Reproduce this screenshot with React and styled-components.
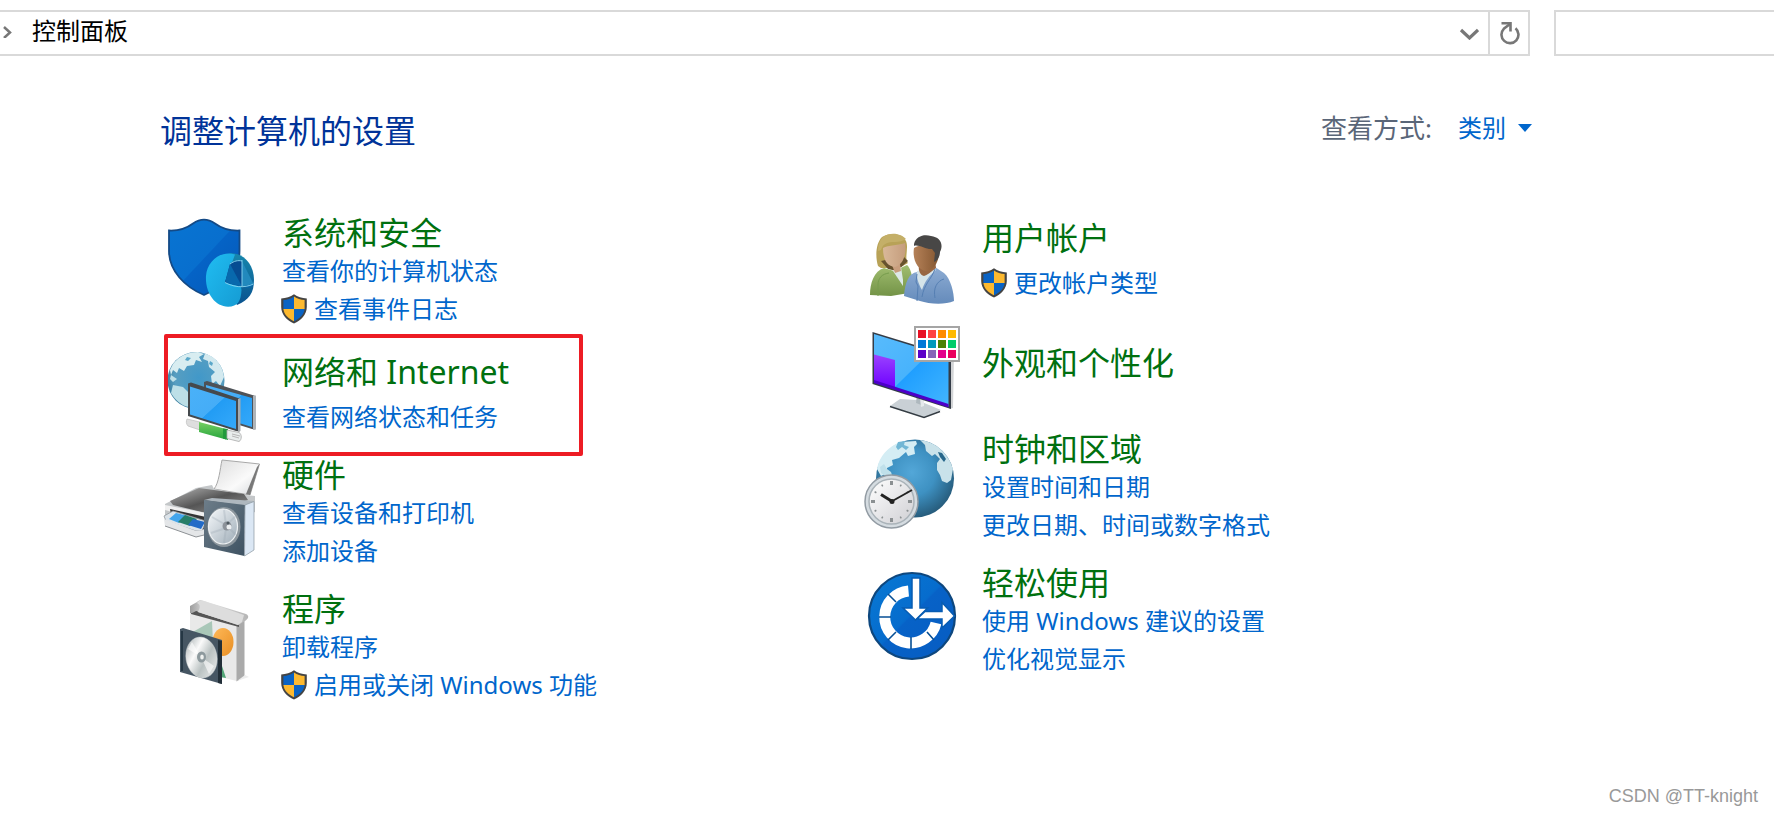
import React from "react"
import styled, { createGlobalStyle } from "styled-components"

const GlobalStyle = createGlobalStyle`
    * {
        box-sizing: border-box;
    }
    body {
        margin: 0;
        background-color: #FFF;
        font-family: "Noto Sans", "Noto Sans CJK SC", sans-serif;
        font-weight: 400;
    }
`

const Page = styled.div`
    min-height: 100vh;
    display: flex;
    flex-direction: column;
`

const Toolbar = styled.header`
    display: flex;
    gap: 24px;
    padding-top: 10px;
`

const AddressBar = styled.nav`
    flex: 1;
    height: 46px;
    display: flex;
    align-items: center;
    border: 2px solid #d9d9d9;
    border-left: 0;
`

const Crumb = styled.a`
    flex: 1;
    display: flex;
    align-items: center;
    gap: 20px;
    padding: 0 0 4px 2px;
    color: #000;
    font-size: 24px;
    line-height: 38px;
    text-decoration: none;
`

const BarButton = styled.button`
    width: ${props => props.$divided ? "40px" : "38px"};
    height: 42px;
    display: flex;
    align-items: center;
    justify-content: center;
    padding: 0;
    border: 0;
    border-left: ${props => props.$divided ? "2px solid #d9d9d9" : "0"};
    background: none;
`

const SearchBox = styled.input`
    width: 220px;
    height: 46px;
    padding: 0 12px;
    border: 2px solid #d9d9d9;
    border-right: 0;
    border-radius: 0;
    background-color: #FFF;
    font: inherit;
    font-size: 24px;
    outline: none;
`

const Content = styled.main`
    padding: 52px 240px 0 160px;
`

const TitleRow = styled.div`
    display: flex;
    justify-content: space-between;
    align-items: flex-start;
    margin-bottom: 60px;
`

const Title = styled.h1`
    margin: 0;
    color: #003399;
    font-size: 32px;
    font-weight: 400;
    line-height: 46px;
`

const ViewBy = styled.div`
    display: flex;
    align-items: center;
    line-height: 40px;
`

const ViewLabel = styled.label`
    margin-right: 26px;
    color: #5a6678;
    font-size: 26px;
`

const ViewSelect = styled.select`
    appearance: none;
    margin: 0 12px 0 0;
    padding: 0;
    border: 0;
    background: none;
    color: #0066cc;
    font: inherit;
    font-size: 24px;
`

const Columns = styled.div`
    display: grid;
    grid-template-columns: repeat(2, 700px);
    align-items: start;
`

const Column = styled.div`
    display: flex;
    flex-direction: column;
    gap: 20px;
`

const Category = styled.section`
    position: relative;
    display: flex;
    align-items: flex-start;
    gap: 18px;
    min-height: 88px;
`

const CategoryIcon = styled.svg`
    flex: none;
    width: 104px;
    height: 108px;
    margin-bottom: -20px;
`

const CategoryText = styled.div`
    align-self: ${props => props.$middle ? "center" : "flex-end"};
    display: flex;
    flex-direction: column;
    gap: ${props => props.$loose ? "7px" : "0"};
    padding-bottom: ${props => props.$middle ? "6px" : "0"};
`

const CategoryTitle = styled.h2`
    margin: 0;
    font-size: 32px;
    font-weight: 400;
    line-height: 38px;
    a {
        color: #00700f;
        text-decoration: none;
    }
`

const TaskLink = styled.a`
    display: flex;
    align-items: center;
    gap: 6px;
    color: #0066cc;
    font-size: 24px;
    line-height: 38px;
    white-space: pre;
    text-decoration: none;
    svg {
        margin-left: -2px;
    }
`

const Highlight = styled.span`
    position: absolute;
    top: -14px;
    left: 4px;
    width: 419px;
    height: 122px;
    border: 4px solid #ed1c24;
    border-radius: 2px;
    pointer-events: none;
`

const Footer = styled.footer`
    margin-top: auto;
    padding: 0 16px 6px 0;
    color: #999;
    font-family: "Liberation Sans", sans-serif;
    font-size: 18px;
    line-height: 26px;
    text-align: right;
`

const UacShield = () => (
    <svg width="28" height="32" viewBox="0 0 28 32" aria-hidden="true">
        <path d="M14 1.200C10.500 4 6 5.200 1.200 5.400V14C1.200 21.500 7 27.500 14 30.600C21 27.500 26.800 21.500 26.800 14V5.400C22 5.200 17.500 4 14 1.200Z" fill="#444" />
        <path d="M14 3.500C10.800 5.700 7.200 6.700 3.400 7V16H14Z" fill="#0a63c4" />
        <path d="M14 3.500C17.200 5.700 20.800 6.700 24.600 7V16H14Z" fill="#fdb92f" />
        <path d="M3.400 16C4 21.500 8.500 25.800 14 28.300V16Z" fill="#fdb92f" />
        <path d="M24.600 16C24 21.500 19.500 25.800 14 28.300V16Z" fill="#0a63c4" />
    </svg>
)

const SecurityIcon = () => (
    <>
        <defs>
            <linearGradient id="sec-a" x1="0" y1="0" x2="1" y2="1">
                <stop offset="0" stopColor="#0874d2" />
                <stop offset=".5" stopColor="#086fce" />
                <stop offset=".51" stopColor="#0563c6" />
                <stop offset="1" stopColor="#0559b8" />
            </linearGradient>
            <linearGradient id="sec-b" x1="0" y1="0" x2="1" y2="1">
                <stop offset="0" stopColor="#20bdf2" />
                <stop offset="1" stopColor="#159bd3" />
            </linearGradient>
            <linearGradient id="sec-c" x1="0" y1="0" x2="0" y2="1">
                <stop offset="0" stopColor="#1787ad" />
                <stop offset="1" stopColor="#09528f" />
            </linearGradient>
        </defs>
        <path d="M9 16.500C20 17 27 14 33 9.500C40 4.500 48 4.500 55 9.500C61 14 68 17 79.500 16.500V37C79.500 57 63 73 44 81C25 73 9 57 9 37Z" fill="url(#sec-a)" stroke="#144a86" strokeWidth="1.800" />
        <path d="M69 39.500C83 38 94 50 94 66C94 79 89 86 77 91L66 68Z" fill="url(#sec-c)" />
        <path d="M75 40.500C61 36 47 47 46 62C45 79 55 92.500 68 92.800C78 92.500 81 87 81.500 76L81 73L65 68Z" fill="url(#sec-b)" />
        <path d="M82 47L93.500 70L82 72.500Z" fill="#2289bd" />
        <path d="M70 50C74 46.500 78 46 82 47V72.500L65 68.500Z" fill="#064c92" />
        <path d="M70 50L82 72.500L93.500 70C92 74 87 74.500 82 72.500L65 68.500Z" fill="#0869ad" />
        <path d="M82 46V73M65 68.500C73 73 84 74.500 93.500 70M70 50C74 47 78 46 82 47" fill="none" stroke="#8cd7f2" strokeWidth=".900" />
    </>
)

const NetworkIcon = () => (
    <>
        <defs>
            <radialGradient id="net-a" cx=".55" cy=".45" r=".6">
                <stop offset="0" stopColor="#4198c9" />
                <stop offset=".7" stopColor="#579ec1" />
                <stop offset="1" stopColor="#347799" />
            </radialGradient>
            <linearGradient id="net-b" x1="0" y1="0" x2="1" y2="1">
                <stop offset="0" stopColor="#4ab1f8" />
                <stop offset=".5" stopColor="#45adf7" />
                <stop offset=".51" stopColor="#229cf4" />
                <stop offset="1" stopColor="#35a9fa" />
            </linearGradient>
            <linearGradient id="net-c" x1="0" y1="0" x2="0" y2="1">
                <stop offset="0" stopColor="#75cf63" />
                <stop offset="1" stopColor="#28a53d" />
            </linearGradient>
        </defs>
        <circle cx="36" cy="32.500" r="28.500" fill="url(#net-a)" />
        <path d="M13 16C19 8 28 4 38 4L44 6L39 9L42 14L36 12L34 17L27 18L24 23L19 20L17 25L13 22L11 27L10 22Z" fill="#d8edf1" />
        <path d="M45 5.500C56 9 63 18 64 29L60 38L56 33L52 36L51 28L55 24L49 19L48 13L43 11Z" fill="#d3e9ef" />
        <path d="M11 27L17 31L13 34L10 31ZM13 37L23 39L31 47L28 53L29 59C22 58 15 52 11 45Z" fill="#bddfe7" />
        <path d="M27 9L31 10L28 13L25 12ZM50 13L53 15L52 18L49 16Z" fill="#5aa7c9" />
        <path d="M44 34L47 33L95.500 48V81.500L92 81L44 66Z" fill="#4e5257" />
        <path d="M46 37L92 50V79L46 65Z" fill="url(#net-b)" />
        <path d="M93 48L96 47.500V81L93 82Z" fill="#aeb4b9" />
        <path d="M28 35.500L31 34.500L79.500 50.500V83.500L76 83L28 68Z" fill="#45494d" />
        <path d="M30 38.500L76 53V81L30 66.500Z" fill="url(#net-b)" />
        <path d="M78 51L80.500 50V83L78 84Z" fill="#a5abb0" />
        <path d="M27 71L40 74V82L28 78C26 76 26 73 27 71Z" fill="#dedede" stroke="#bdbdbd" strokeWidth=".700" />
        <path d="M39 74L66 81V91.500L39 84Z" fill="url(#net-c)" />
        <path d="M63 80.500L68 81V92L63 90.500Z" fill="#229a3c" />
        <path d="M67 82L79 84.500C82 86 82 92 79 93.500L67 90.500Z" fill="#e9eded" stroke="#aaa" strokeWidth=".800" />
        <path d="M72 86L80 88M72 88L79 90" stroke="#b6b6b6" />
    </>
)

const HardwareIcon = () => (
    <g transform="translate(0 -4)">
        <defs>
            <linearGradient id="hw-a" x1="0" y1="0" x2="1" y2="1">
                <stop offset="0" stopColor="#dcdcdc" />
                <stop offset=".6" stopColor="#fafafa" />
                <stop offset="1" stopColor="#d4d7da" />
            </linearGradient>
            <linearGradient id="hw-b" x1="0" y1="0" x2="1" y2="1">
                <stop offset="0" stopColor="#b5b5b5" />
                <stop offset=".5" stopColor="#555" />
                <stop offset="1" stopColor="#969696" />
            </linearGradient>
            <linearGradient id="hw-c" x1="0" y1="0" x2="1" y2="1">
                <stop offset="0" stopColor="#6d7d89" />
                <stop offset="1" stopColor="#3e5262" />
            </linearGradient>
            <linearGradient id="hw-d" x1="0" y1="0" x2="1" y2="1">
                <stop offset="0" stopColor="#f5f8fa" />
                <stop offset="1" stopColor="#9eacb7" />
            </linearGradient>
        </defs>
        <path d="M62 8L99.500 12L90 43L54 37C59 31 60 17 62 8Z" fill="url(#hw-a)" stroke="#a8a8a8" strokeWidth="1" />
        <path d="M99.500 12L90 43L86 42L97 15Z" fill="#787878" />
        <path d="M5 52L36 36L52 33L54 37L86 43L95 44V60L80 66L45 78L5 63Z" fill="#c4c7c9" />
        <path d="M10 49L39 36L84 42L88 48L46 61L13 53Z" fill="url(#hw-b)" />
        <path d="M5 53L46 61V69L5 58Z" fill="#f0f0f0" />
        <path d="M10 57L46 65V78L12 68Z" fill="#343434" />
        <path d="M4 64L13 59L46 69L42 79L36 79L6 69Z" fill="#dce3e9" stroke="#919699" strokeWidth=".800" />
        <path d="M16 61L28 64L19 71L9 67Z" fill="#43a5eb" />
        <path d="M25 63L37 67L30 74L18 70Z" fill="#277e68" />
        <path d="M33 67L45 70L41 77L28 73Z" fill="#236bc7" />
        <path d="M4 67L36 79L44 78V83L36 85L5 74Z" fill="#e4e6e8" />
        <path d="M5 74L36 85L44 83" fill="none" stroke="#8d9195" strokeWidth="1" />
        <path d="M44 48L52 46L94 49L85 54Z" fill="#aeb7be" />
        <path d="M44 48L85 53L84.500 104L44 95Z" fill="url(#hw-c)" />
        <path d="M85 53L94 49.500V98L84.500 104Z" fill="#dbe7f4" stroke="#8a969f" strokeWidth=".700" />
        <ellipse cx="64" cy="75" rx="16.500" ry="20" fill="#8c969d" />
        <ellipse cx="63" cy="74.500" rx="14.500" ry="17.500" fill="url(#hw-d)" stroke="#eef1f3" strokeWidth="1.200" />
        <path d="M66 73L52 65M66 73L64 58M66 73L76 64M66 76L51 81M66 76L64 91M69 76L76 83" stroke="#9ba7b2" strokeWidth="2" opacity=".3" />
        <circle cx="67" cy="74" r="4.500" fill="#8c9299" />
        <circle cx="69" cy="75" r="2.500" fill="#edf0f2" />
        <circle cx="68" cy="71" r="1.500" fill="#4e5960" />
    </g>
)

const ProgramsIcon = () => (
    <>
        <defs>
            <linearGradient id="pr-a" x1="0" y1="0" x2="1" y2="0">
                <stop offset="0" stopColor="#9d9d9d" />
                <stop offset=".3" stopColor="#e5e5e5" />
                <stop offset="1" stopColor="#b5b5b5" />
            </linearGradient>
            <linearGradient id="pr-b" x1="0" y1="0" x2="1" y2="1">
                <stop offset="0" stopColor="#9ba5a7" />
                <stop offset=".35" stopColor="#fafafa" />
                <stop offset=".6" stopColor="#b9c1c1" />
                <stop offset="1" stopColor="#f3f3f3" />
            </linearGradient>
            <linearGradient id="pr-c" x1="0" y1="0" x2="1" y2="1">
                <stop offset="0" stopColor="#ffb958" />
                <stop offset="1" stopColor="#e88f25" />
            </linearGradient>
        </defs>
        <path d="M30 20L77 35V91L60 87L30 76Z" fill="#e9e9e9" />
        <path d="M76.500 35L84.500 30V87L76.500 91.500Z" fill="#aaa" />
        <path d="M85 85L89 87L77 91Z" fill="#ededed" />
        <path d="M52 31L31 43V51L53 53Z" fill="#a9c7b8" />
        <ellipse cx="63" cy="52" rx="10.500" ry="14" fill="url(#pr-c)" />
        <path d="M61 73L66 88L60 87Z" fill="#52a576" />
        <path d="M31 18L79 34V37L31 24Z" fill="#555" />
        <path d="M30 16L37 12C39 10 41 10 44 11L86 24C90 26 88 29 85 31L78 35L38 22C36 19 34 24 30 23Z" fill="url(#pr-a)" />
        <path d="M37 13C42 15 39 20 38 22L78 35L82 32L84 25L44 11C41 10 39 10 37 13Z" fill="#ddd" />
        <path d="M20 39L23 38L62 50V94L20 82Z" fill="#465663" />
        <path d="M58 50L62 51V94L58 93Z" fill="#222f38" />
        <ellipse cx="41.500" cy="67.500" rx="15.500" ry="20.500" transform="rotate(-9 41.500 67.500)" fill="url(#pr-b)" stroke="#d9dddd" strokeWidth=".500" />
        <path d="M41 67L32 52L28 59ZM41 67L49 84L54 76Z" fill="#fff" opacity=".6" />
        <ellipse cx="41.500" cy="67" rx="4.500" ry="5.500" fill="#8d999d" />
        <ellipse cx="42" cy="67" rx="1.800" ry="2.500" fill="#eff1ef" />
        <path d="M22 41V81" stroke="#253744" strokeWidth="2" />
    </>
)

const UsersIcon = () => (
    <>
        <defs>
            <linearGradient id="us-a" x1="0" y1="0" x2="1" y2="0">
                <stop offset="0" stopColor="#d9b899" />
                <stop offset="1" stopColor="#c59d7d" />
            </linearGradient>
            <linearGradient id="us-b" x1="0" y1="0" x2="1" y2="0">
                <stop offset="0" stopColor="#b58158" />
                <stop offset="1" stopColor="#835630" />
            </linearGradient>
            <linearGradient id="us-c" x1="0" y1="0" x2="0" y2="1">
                <stop offset="0" stopColor="#a1be70" />
                <stop offset="1" stopColor="#739347" />
            </linearGradient>
            <linearGradient id="us-d" x1="0" y1="0" x2="0" y2="1">
                <stop offset="0" stopColor="#8dacd3" />
                <stop offset="1" stopColor="#658bbb" />
            </linearGradient>
        </defs>
        <path d="M18 52C15 42 16 29 22 23C30 18 42 19 46 27C49 34 44 45 48 49L39 54L21 54Z" fill="#b8a257" />
        <path d="M21 47L28 55L37 57L48 47L43 42Z" fill="#67522e" />
        <path d="M10 81C10 69 14 57 24 54L34 57L47 51C53 56 54 73 49 79L31 82Z" fill="url(#us-c)" />
        <path d="M33 57L41 53L43 66L43 72Z" fill="#dce9e7" />
        <path d="M32 51L40 50L41 57L35 59Z" fill="#c99e7e" />
        <path d="M23 34C28 31 40 31 45 29C47 40 43 51 35 53C27 52 23 46 23 34Z" fill="url(#us-a)" />
        <path d="M21 36C23 29 28 28 35 28C39 28 43 27 46 25C42 20 31 17 23 23C19 27 18 33 18 37Z" fill="#c4af68" />
        <path d="M18 82V71C18 64 22 60 29 59" fill="none" stroke="#769c4c" strokeWidth="1" />
        <path d="M44 82C45 68 49 59 57 58L75 53L84 59C91 65 94 79 94 87C85 91 69 90 60 87Z" fill="url(#us-d)" />
        <path d="M57 57L75 51L76 56C69 62 65 67 62 76C58 69 56 62 57 57Z" fill="#d5e4e9" />
        <path d="M59 50L75 46L76 54C71 58 67 61 64 62C60 61 58 57 59 50Z" fill="#986642" />
        <path d="M54 34C60 29 68 34 75 31L79 35C80 48 73 57 66 57C58 56 52 46 54 34Z" fill="url(#us-b)" />
        <path d="M54 30C56 22 64 20 71 22C80 23 84 30 80 38C80 43 77 47 74 48L75 39L72 35C67 36 58 30 54 32Z" fill="#484746" />
        <path d="M57 60L56 68L58 72L57 87M75 84C73 74 77 67 84 65M75 55C71 66 64 70 62 83" fill="none" stroke="#557fb3" strokeWidth="1" />
    </>
)

const swatches = [
    ["#e81123", "#ff4343", "#ff8c00", "#ffb900"],
    ["#0078d7", "#0099bc", "#498205", "#00cc6a"],
    ["#5b00c8", "#8764b8", "#e3008c", "#ea005e"]
]

const AppearanceIcon = () => (
    <>
        <defs>
            <linearGradient id="ap-a" x1="0" y1="0" x2="1" y2="1">
                <stop offset="0" stopColor="#58bbfc" />
                <stop offset=".5" stopColor="#48b3fc" />
                <stop offset=".51" stopColor="#209fff" />
                <stop offset="1" stopColor="#43b6ff" />
            </linearGradient>
            <linearGradient id="ap-b" x1="0" y1="0" x2="0" y2="1">
                <stop offset="0" stopColor="#9a42ff" />
                <stop offset="1" stopColor="#6e00ff" />
            </linearGradient>
        </defs>
        <path d="M30 84L40 77L57 78L81 88L64 95.500Z" fill="#c9d0d5" />
        <path d="M30 84.500L64 95.500L80 89.500" fill="none" stroke="#343c43" strokeWidth="1.500" />
        <path d="M57 72L64 76V84L56 81Z" fill="#aeb8be" />
        <path d="M60 76L64 77V84L61 85Z" fill="#e5e9eb" />
        <path d="M88 30L94 32L93 86L89 87Z" fill="#d2d4d6" />
        <path d="M12.500 10L91 34V87L12.500 62Z" fill="#343c47" />
        <path d="M14 12L88.500 35V84.500L14 60Z" fill="url(#ap-a)" />
        <path d="M14 32.500L35 38V66L14 59Z" fill="url(#ap-b)" />
        <path d="M14 58L88.500 82V85.500L14 61Z" fill="#4d00c9" />
        <rect x="55" y="5" width="44" height="34" fill="#fff" stroke="#a5a5a5" strokeWidth="2" />
        {swatches.map((row, y) => row.map((color, x) =>
            <rect key={color} x={58 + x * 10} y={8 + y * 10} width="8" height="8" fill={color} />
        ))}
    </>
)

const ticks = [0, 30, 60, 90, 120, 150, 180, 210, 240, 270, 300, 330]

const ClockIcon = () => (
    <>
        <defs>
            <radialGradient id="cl-a" cx=".46" cy=".42" r=".6">
                <stop offset="0" stopColor="#53a7d8" />
                <stop offset=".5" stopColor="#3e91c2" />
                <stop offset="1" stopColor="#255978" />
            </radialGradient>
            <linearGradient id="cl-b" x1="0" y1="0" x2="1" y2="1">
                <stop offset="0" stopColor="#fff" />
                <stop offset="1" stopColor="#cfcfd3" />
            </linearGradient>
        </defs>
        <circle cx="55" cy="48.500" r="39" fill="url(#cl-a)" />
        <path d="M17 39C19 27 28 16 41 12L56 11L57 14L54 17L55 24L48 26L46 22L39 28L32 30L33 35L27 38L27 43L21 46Z" fill="#d4edf4" />
        <path d="M38 12L45 11L44 15L49 17L46 20L42 17L38 20L36 17Z" fill="#72b7d5" />
        <path d="M60 10C77 12 89 25 93 39L91 50L87 53L82 51L80 45L77 40L77 33L80 29L75 24L72 26L66 21L65 15Z" fill="#c9e2ea" />
        <path d="M78 22L82 23L86 29L84 32L80 27Z" fill="#28678b" />
        <path d="M20 37L24 34L27 39L31 42L32 45L27 47L21 43Z" fill="#bfe0ea" />
        <circle cx="31.500" cy="71.500" r="26.500" fill="#d5dce1" stroke="#929ba3" strokeWidth="1.500" />
        <circle cx="31.500" cy="71.500" r="22.500" fill="url(#cl-b)" stroke="#aab3b9" strokeWidth="1.500" />
        {ticks.map(angle =>
            <path key={angle} d={angle % 90 ? "M31.500 52V54" : "M31.500 51V55"} transform={`rotate(${angle} 31.500 71.500)`} stroke="#8b9092" strokeWidth={angle % 90 ? 1.500 : 3} />
        )}
        <path d="M21 64.500L33 72" stroke="#222" strokeWidth="3" />
        <path d="M31.500 71.500L52 60" stroke="#222" strokeWidth="2" />
        <circle cx="32" cy="71.500" r="2.500" fill="#222" />
    </>
)

const EaseIcon = () => (
    <>
        <defs>
            <linearGradient id="ea-a" x1="0" y1="0" x2="1" y2="1">
                <stop offset="0" stopColor="#0879d4" />
                <stop offset=".48" stopColor="#066ccd" />
                <stop offset=".5" stopColor="#0762c7" />
                <stop offset="1" stopColor="#075cc2" />
            </linearGradient>
        </defs>
        <circle cx="52" cy="52" r="43" fill="url(#ea-a)" stroke="#0e477e" strokeWidth="2.200" />
        <path d="M48.500 27A26 26 0 1 0 76 59" fill="none" stroke="#fff" strokeWidth="11" />
        <path d="M36 38L28 30M31 53H19M36 68L28 76M51 73V85M67 68L74 76" stroke="#074f95" strokeWidth="1.600" />
        <path d="M52 14H60V44H67.500L55.500 56L43 44H52Z" fill="#fff" stroke="#075cb2" strokeWidth="1.500" />
        <path d="M65 47.500H82V38.500L94.500 52L82 64V55H57Z" fill="#fff" stroke="#075cb2" strokeWidth="1.500" />
    </>
)

const leftColumn = [
    { title: "系统和安全", icon: SecurityIcon, links: [{ text: "查看你的计算机状态" }, { text: "查看事件日志", shield: true }] },
    { title: "网络和 Internet", icon: NetworkIcon, marked: true, links: [{ text: "查看网络状态和任务" }] },
    { title: "硬件", icon: HardwareIcon, links: [{ text: "查看设备和打印机" }, { text: "添加设备" }] },
    { title: "程序", icon: ProgramsIcon, links: [{ text: "卸载程序" }, { text: "启用或关闭 Windows 功能", shield: true }] }
]

const rightColumn = [
    { title: "用户帐户", icon: UsersIcon, links: [{ text: "更改帐户类型", shield: true }] },
    { title: "外观和个性化", icon: AppearanceIcon, links: [] },
    { title: "时钟和区域", icon: ClockIcon, links: [{ text: "设置时间和日期" }, { text: "更改日期、时间或数字格式" }] },
    { title: "轻松使用", icon: EaseIcon, links: [{ text: "使用 Windows 建议的设置" }, { text: "优化视觉显示" }] }
]

const CategoryList = (props) => (
    <Column>
        {props.categories.map(category => {
            const Icon = category.icon
            return (
                <Category key={category.title}>
                    <CategoryIcon viewBox="0 0 104 108" aria-hidden="true"><Icon /></CategoryIcon>
                    <CategoryText $middle={category.links.length === 0} $loose={category.links.length === 1}>
                        <CategoryTitle><a href="#category">{category.title}</a></CategoryTitle>
                        {category.links.map(link =>
                            <TaskLink key={link.text} href="#task">
                                {link.shield ? <UacShield /> : null}
                                {link.text}
                            </TaskLink>
                        )}
                    </CategoryText>
                    {category.marked ? <Highlight /> : null}
                </Category>
            )
        })}
    </Column>
)

const App = () => (
    <Page>
        <GlobalStyle />
        <Toolbar>
            <AddressBar>
                <Crumb href="#home">
                    <svg width="10" height="14" viewBox="0 0 10 14" aria-hidden="true">
                        <path d="M2 3L8 8.500L2 14" fill="none" stroke="#777" strokeWidth="2.500" />
                    </svg>
                    控制面板
                </Crumb>
                <BarButton type="button" aria-label="历史记录">
                    <svg width="20" height="14" viewBox="0 0 20 14" aria-hidden="true">
                        <path d="M2 4L10.500 12L19 4" fill="none" stroke="#777" strokeWidth="3.200" />
                    </svg>
                </BarButton>
                <BarButton type="button" $divided aria-label="刷新">
                    <svg width="22" height="24" viewBox="0 0 22 24" aria-hidden="true">
                        <path d="M17.500 7.200A8.500 8.500 0 1 1 5.800 7.800L12 3" fill="none" stroke="#777" strokeWidth="2.600" />
                        <path d="M3.500 2.200H12.500V10.500" fill="none" stroke="#777" strokeWidth="2.600" />
                    </svg>
                </BarButton>
            </AddressBar>
            <SearchBox type="text" aria-label="搜索控制面板" />
        </Toolbar>
        <Content>
            <TitleRow>
                <Title>调整计算机的设置</Title>
                <ViewBy>
                    <ViewLabel htmlFor="view-by">查看方式:</ViewLabel>
                    <ViewSelect id="view-by">
                        <option>类别</option>
                    </ViewSelect>
                    <svg width="16" height="8" viewBox="0 0 16 8" aria-hidden="true">
                        <path d="M0 0H14L7 8Z" fill="#0066cc" />
                    </svg>
                </ViewBy>
            </TitleRow>
            <Columns>
                <CategoryList categories={leftColumn} />
                <CategoryList categories={rightColumn} />
            </Columns>
        </Content>
        <Footer>CSDN @TT-knight</Footer>
    </Page>
)

export default App
